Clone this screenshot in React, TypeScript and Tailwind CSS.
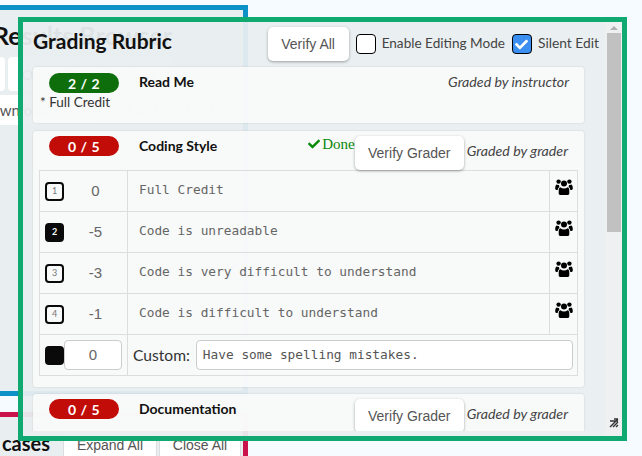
import { FaCheck } from 'react-icons/fa';

const bodyFont = "font-['Lato','Noto_Sans',sans-serif]";
const monoFont = "font-['DejaVu_Sans_Mono',monospace]";
const arialFont = "font-['Liberation_Sans',Arial,sans-serif]";

const marks = [
  { key: 1, points: '0', text: 'Full Credit', selected: false },
  { key: 2, points: '-5', text: 'Code is unreadable', selected: true },
  { key: 3, points: '-3', text: 'Code is very difficult to understand', selected: false },
  { key: 4, points: '-1', text: 'Code is difficult to understand', selected: false },
];

function GroupIcon() {
  return (
    <svg viewBox="0 0 18 16" className="h-4 w-[18px] fill-black">
      <circle cx="9" cy="4.6" r="3" />
      <circle cx="3.6" cy="2.6" r="2.2" />
      <circle cx="14.4" cy="2.6" r="2.2" />
      <path d="M5.4 8.2c1 .8 2.2 1.2 3.6 1.2s2.6-.4 3.6-1.2c1.2.3 1.7 1.6 1.7 3.2v2.8c0 1.2-.8 1.8-1.8 1.8H5.5c-1 0-1.8-.6-1.8-1.8v-2.8c0-1.6.5-2.9 1.7-3.2z" />
      <path d="M.2 9c0-2 .6-3.4 1.7-3.6.7.5 1.4.7 2.2.7-.2.8 0 1.4.4 1.9-1 .6-1.7 1.6-1.8 3H1.4C.6 11 .2 10.2.2 9z" />
      <path d="M17.8 9c0-2-.6-3.4-1.7-3.6-.7.5-1.4.7-2.2.7.2.8 0 1.4-.4 1.9 1 .6 1.7 1.6 1.8 3h1.3c.8 0 1.2-.8 1.2-2z" />
    </svg>
  );
}

function VerifyButton({ label, className }: { label: string; className: string }) {
  return (
    <button
      className={`${arialFont} h-[34px] shrink-0 rounded-[5px] bg-white text-[14px] text-[#555] shadow-[0_1px_3px_rgba(0,0,0,0.35)] ${className}`}
    >
      {label}
    </button>
  );
}

function Pill({ score, color }: { score: string; color: string }) {
  return (
    <div
      className={`flex h-5 w-[70px] shrink-0 items-center justify-center rounded-full text-[14px] font-bold tracking-[0.5px] text-white ${color}`}
    >
      {score}
    </div>
  );
}

function HotKey({ n, selected }: { n: number; selected: boolean }) {
  return (
    <div
      className={`flex h-[19px] w-[19px] shrink-0 items-center justify-center rounded-[4px] border-2 border-[#0a0a0a] text-[9px] ${
        selected ? 'bg-[#0a0a0a] font-bold text-white' : 'bg-transparent text-[#777]'
      }`}
    >
      {n}
    </div>
  );
}

function MarkRow({ mark }: { mark: (typeof marks)[number] }) {
  return (
    <div className="flex h-[41px] border-b border-[#ddd]">
      <div className="flex w-[88px] shrink-0 items-center border-r border-[#ddd] pl-[5px]">
        <HotKey n={mark.key} selected={mark.selected} />
        <span className={`${arialFont} w-[63px] text-center text-[15px] text-[#666]`}>{mark.points}</span>
      </div>
      <div className={`${monoFont} flex-1 pl-[11px] pt-[9px] text-[12.8px] text-[#666]`}>{mark.text}</div>
      <div className="flex w-[28px] shrink-0 justify-center border-l border-[#ddd] pt-[8px]">
        <GroupIcon />
      </div>
    </div>
  );
}

function Background() {
  return (
    <div className={`${bodyFont} flex w-[258px] -translate-x-[10px] flex-col pt-[5px]`}>
      <div className="h-[391px] border-[5px] border-[#0d92c8] bg-[#e9eef0]">
        <div className="-ml-[2px] whitespace-nowrap pt-[7px] text-[25px] font-bold leading-[36px] text-[#111]">
          Results Browser
        </div>
        <div className="mt-[4px] flex gap-[3px]">
          <div className="h-[34px] w-[10px] shrink-0 rounded-r bg-white" />
          <div className="flex h-[34px] w-[164px] shrink-0 items-center justify-center whitespace-nowrap rounded bg-white text-[14px] text-[#555]">
            Open/Close Checkout
          </div>
        </div>
        <div className="mt-[4px] flex items-start">
          <div className="flex h-[30px] w-[105px] shrink-0 items-center justify-end whitespace-nowrap rounded-r bg-white text-[15px] text-[#555]">
            Download Zip File
          </div>
          <div className="-mt-[3px] ml-[15px] flex h-[32px] w-[57px] shrink-0 items-center justify-center rounded bg-[#dceefc] text-[14px] text-[#555]">
            Light
          </div>
          <div className="-mt-[3px] ml-[3px] flex h-[32px] w-[53px] shrink-0 items-center justify-center rounded bg-white text-[14px] text-[#555]">
            Dark
          </div>
        </div>
      </div>
      <div className="mt-4 h-[60px] border-[5px] border-b-0 border-[#c9134a] bg-[#e9eef0] pt-[11px]">
        <div className="flex items-start pl-[5px]">
          <span className="mt-[3px] w-[50px] shrink-0 whitespace-nowrap text-right text-[20px] font-bold leading-[24px] text-[#111]">
            cases
          </span>
          <div className={`${arialFont} ml-[13px] flex`}>
            <div className="flex h-[34px] w-[94px] shrink-0 items-center justify-center border border-[#ddd] bg-white text-[14px] text-[#555]">
              Expand All
            </div>
            <div className="ml-[2px] flex h-[34px] w-[82px] shrink-0 items-center justify-center border border-[#ddd] bg-white text-[14px] text-[#555]">
              Close All
            </div>
          </div>
        </div>
      </div>
    </div>
  );
}

function Scrollbar() {
  return (
    <div className="relative flex h-full w-[17px] shrink-0 flex-col items-center bg-[#f1f1f1]/50">
      <div className="mt-[4px] h-0 w-0 border-x-[4px] border-b-[4px] border-x-transparent border-b-[#b0b0b0]" />
      <div className="mt-[3px] h-[199px] w-[14px] bg-[#c1c1c1]" />
    </div>
  );
}

export default function App() {
  return (
    <div className="relative h-[456px] w-[642px] overflow-hidden bg-[#f5fbff]">
      <Background />

      {/* floating rubric window */}
      <div
        className={`${bodyFont} absolute left-[18px] top-[17px] flex h-[424px] w-[609px] border-[5px] border-[#0fa971] bg-[#e9eef0]/95`}
      >
        <div className="h-[409px] flex-1 overflow-hidden pl-[10px] pr-[21px]">
          <div className="flex h-[45px] items-start">
            <h1 className="mt-[4px] text-[21px] font-bold leading-[30px] text-[#111]">Grading Rubric</h1>
            <VerifyButton label="Verify All" className="ml-auto mt-[5px] w-[81px]" />
            <div className="ml-[7px] mt-[12px] h-5 w-5 rounded-[4px] border border-black bg-white" />
            <span className="ml-[6px] mt-[11px] text-[13.6px] leading-[20px] text-[#444]">Enable Editing Mode</span>
            <div className="ml-[7px] mt-[12px] flex h-5 w-5 items-center justify-center rounded-[4px] border border-black bg-[#3b8ff0] text-[13px] text-white">
              <FaCheck />
            </div>
            <span className="ml-[6px] mr-[-15px] mt-[11px] text-[13.8px] leading-[20px] text-[#444]">Silent Edit</span>
          </div>

          <div className="h-[56px] rounded-[3px] bg-[#fafafa]/90 pl-[6px] pr-[15px] shadow-[0_0_2px_rgba(0,0,0,0.15)]">
            <div className="flex pt-[6px]">
              <div className="ml-[10px]">
                <Pill score="2 / 2" color="bg-[#0e6e0c]" />
              </div>
              <span className="ml-[20px] text-[14px] font-bold leading-[18px] text-[#111]">Read Me</span>
              <span className="ml-auto text-[14.2px] italic leading-[18px] text-[#444]">Graded by instructor</span>
            </div>
            <div className="ml-px text-[13.5px] leading-[18px] text-[#333]">* Full Credit</div>
          </div>

          <div className="mt-2 h-[256px] rounded-[3px] bg-[#fafafa]/90 px-[6px] shadow-[0_0_2px_rgba(0,0,0,0.15)]">
            <div className="flex h-[39px] items-start pt-[5px]">
              <div className="ml-[10px]">
                <Pill score="0 / 5" color="bg-[#c20c08]" />
              </div>
              <span className="ml-[20px] mt-px text-[14px] font-bold leading-[18px] text-[#111]">Coding Style</span>
              <span className="ml-auto flex items-center font-['Liberation_Serif',serif] text-[15px] leading-[16px] text-[#0a8a0a]">
                <FaCheck className="mr-[2px] text-[12px]" />
                Done
              </span>
              <VerifyButton label="Verify Grader" className="w-[109px]" />
              <span className="ml-[3px] mr-[10px] mt-[5px] text-[14.2px] italic leading-[20px] text-[#444]">
                Graded by grader
              </span>
            </div>
            <div className="border-x border-t border-[#ddd]">
              {marks.map((mark) => (
                <MarkRow key={mark.key} mark={mark} />
              ))}
              <div className="flex h-[41px] border-b border-[#ddd]">
                <div className="flex w-[88px] shrink-0 items-center border-r border-[#ddd] pl-[5px]">
                  <div className="h-[19px] w-[19px] shrink-0 rounded-[4px] bg-[#0a0a0a]" />
                  <div
                    className={`${arialFont} flex h-[30px] w-[58px] items-center justify-center rounded-[4px] border border-[#ccc] bg-white text-[15px] text-[#666]`}
                  >
                    0
                  </div>
                </div>
                <span className="ml-[5px] mt-[10px] text-[15.6px] leading-[20px] text-[#333]">Custom:</span>
                <div
                  className={`${monoFont} ml-[6px] mt-[5px] flex h-[30px] w-[377px] items-center rounded-[4px] border border-[#ccc] bg-white pl-[6px] text-[12.8px] text-[#555]`}
                >
                  Have some spelling mistakes.
                </div>
              </div>
            </div>
          </div>

          <div className="mt-[7px] h-[60px] rounded-[3px] bg-[#fafafa]/90 px-[6px] shadow-[0_0_2px_rgba(0,0,0,0.15)]">
            <div className="flex items-start pt-[5px]">
              <div className="ml-[10px]">
                <Pill score="0 / 5" color="bg-[#c20c08]" />
              </div>
              <span className="ml-[20px] mt-px text-[14px] font-bold leading-[18px] text-[#111]">Documentation</span>
              <VerifyButton label="Verify Grader" className="ml-auto w-[109px]" />
              <span className="ml-[3px] mr-[10px] mt-[5px] text-[14.2px] italic leading-[20px] text-[#444]">
                Graded by grader
              </span>
            </div>
          </div>
        </div>
        <Scrollbar />
        {/* resize grip */}
        <svg viewBox="0 0 10 10" className="absolute bottom-[8px] right-[3px] h-[10px] w-[10px]">
          <path d="M1 9 9 1M4 9 9 4M7 9 9 7M1 3h8M5 1h4" stroke="#333" strokeWidth="1.4" fill="none" />
        </svg>
      </div>
    </div>
  );
}
